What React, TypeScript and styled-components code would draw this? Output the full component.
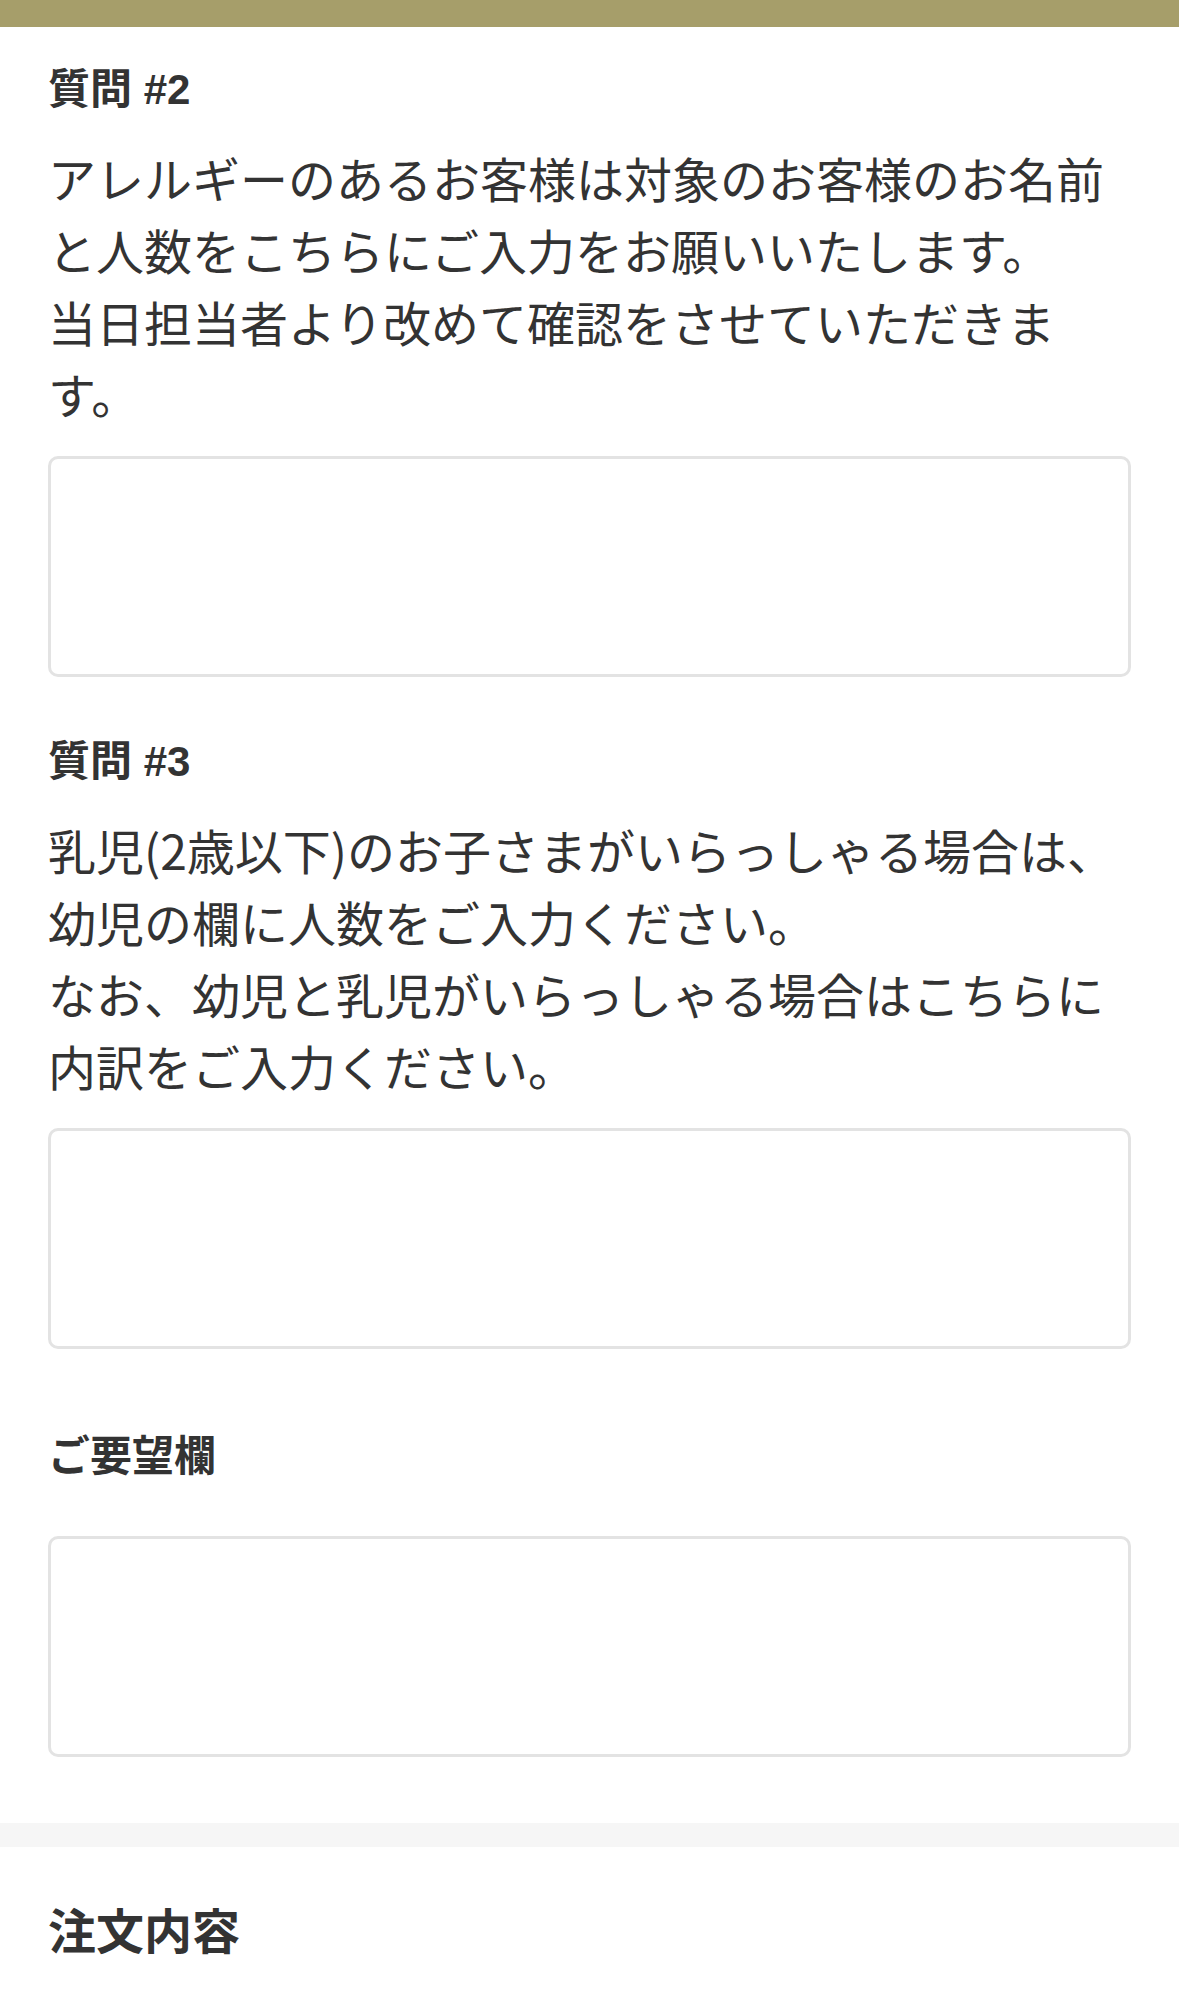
import React from 'react';
import styled, { createGlobalStyle } from 'styled-components';

const GlobalStyle = createGlobalStyle`
    html, body {
        margin: 0;
        padding: 0;
        background: #ffffff;
    }
    body {
        font-family: "Noto Sans CJK JP", "Noto Sans", sans-serif;
        color: #333333;
    }
`;

const TopBar = styled.div`
    height: 27px;
    background: #a69e6a;
`;

const FormSection = styled.section`
    padding: 31px 48px 66px;
`;

const QuestionBlock = styled.div<{ $gap?: number }>`
    margin-top: ${(p) => p.$gap ?? 0}px;
`;

const Label = styled.h3<{ $space: number }>`
    margin: 0 0 ${(p) => p.$space}px;
    font-family: "Liberation Sans", "Noto Sans CJK JP", sans-serif;
    font-size: 42px;
    line-height: 63px;
    font-weight: 700;
    color: #333333;
`;

const Description = styled.p`
    margin: 0 0 27px;
    font-size: 48px;
    line-height: 72px;
    font-weight: 400;
    color: #333333;
`;

const AnswerBox = styled.textarea`
    display: block;
    box-sizing: border-box;
    width: 100%;
    height: 221px;
    margin: 0;
    padding: 20px;
    border: 3px solid #e3e3e3;
    border-radius: 10px;
    background: #ffffff;
    font-family: inherit;
    font-size: 48px;
    color: #333333;
    resize: none;
    outline: none;
`;

const Divider = styled.div`
    height: 24px;
    background: #f6f6f6;
`;

const OrderSection = styled.section`
    padding: 45px 48px 40px;
`;

const OrderTitle = styled.h2`
    margin: 0;
    font-size: 48px;
    line-height: 72px;
    font-weight: 700;
    color: #333333;
`;

interface Question {
    label: string;
    lines: string[];
}

const questions: Question[] = [
    {
        label: '質問 #2',
        lines: [
            'アレルギーのあるお客様は対象のお客様のお名前と人数をこちらにご入力をお願いいたします。',
            '当日担当者より改めて確認をさせていただきます。',
        ],
    },
    {
        label: '質問 #3',
        lines: [
            '乳児(2歳以下)のお子さまがいらっしゃる場合は、幼児の欄に人数をご入力ください。',
            'なお、幼児と乳児がいらっしゃる場合はこちらに内訳をご入力ください。',
        ],
    },
];

function QuestionItem({ question, gap }: { question: Question; gap?: number }) {
    return (
        <QuestionBlock $gap={gap}>
            <Label $space={20}>{question.label}</Label>
            <Description>
                {question.lines.map((line, i) => (
                    <React.Fragment key={i}>
                        {i > 0 && <br />}
                        {line}
                    </React.Fragment>
                ))}
            </Description>
            <AnswerBox aria-label={question.label} />
        </QuestionBlock>
    );
}

export default function App() {
    return (
        <>
            <GlobalStyle />
            <TopBar />
            <FormSection>
                {questions.map((q, i) => (
                    <QuestionItem key={q.label} question={q} gap={i === 0 ? 0 : 53} />
                ))}
                <QuestionBlock $gap={76}>
                    <Label $space={48}>ご要望欄</Label>
                    <AnswerBox aria-label="ご要望欄" />
                </QuestionBlock>
            </FormSection>
            <Divider />
            <OrderSection>
                <OrderTitle>注文内容</OrderTitle>
            </OrderSection>
        </>
    );
}
